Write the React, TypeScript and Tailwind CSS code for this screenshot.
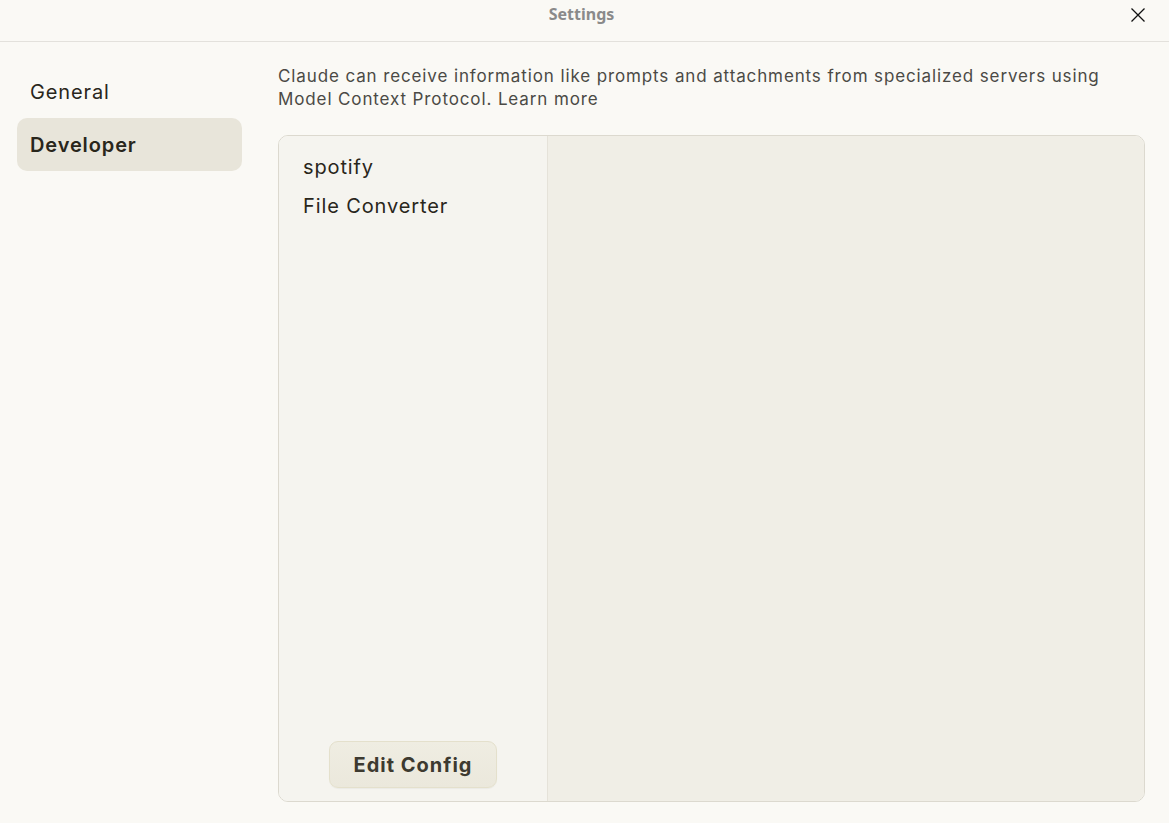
import React from "react";

const font = { fontFamily: "Inter, 'Noto Sans', sans-serif" };

export default function App() {
  return (
    <div className="h-[823px] w-full bg-[#faf9f5] flex flex-col text-[#29261b] tracking-[0.055em]" style={font}>
      {/* title bar */}
      <header className="relative h-[42px] shrink-0 border-b border-[#e3e1dc] flex items-center justify-center tracking-normal">
        <span
          className="text-[16px] font-bold text-[#8a8a8a] -mt-[14px] -ml-[6px]"
          style={{ fontFamily: "'Noto Sans', 'DejaVu Sans', sans-serif" }}
        >
          Settings
        </span>
        <button className="absolute right-[22px] top-[6px] w-[18px] h-[18px] flex items-center justify-center">
          <svg viewBox="0 0 16 16" className="w-[16px] h-[16px]" fill="none" stroke="#111" strokeWidth="1.3">
            <path d="M1.5 1.5 14.5 14.5M14.5 1.5 1.5 14.5" />
          </svg>
        </button>
      </header>

      <div className="flex flex-1 min-h-0">
        {/* sidebar */}
        <nav className="w-[261px] shrink-0 pl-[17px] pr-[19px] pt-[23px] flex flex-col">
          <div className="h-[53px] px-[13px] flex items-center text-[20px]">General</div>
          <div className="h-[53px] px-[13px] flex items-center text-[20px] font-semibold rounded-[10px] bg-[#e8e5da]">
            Developer
          </div>
        </nav>

        {/* main */}
        <main className="flex-1 flex flex-col pl-[17px] pr-[24px] pt-[23px] pb-[21px]">
          <p className="text-[17px] leading-[23px] text-[#4b4a45] pr-[40px]">
            Claude can receive information like prompts and attachments from specialized servers using Model Context
            Protocol. Learn more
          </p>
          <div className="mt-[24px] flex-1 flex rounded-[10px] border border-[#dcd9cf] overflow-hidden">
            <div className="w-[269px] shrink-0 bg-[#f5f4ef] border-r border-[#e5e2d9] flex flex-col px-[24px] pt-[12px] pb-[13px]">
              <div className="text-[20px] leading-[39px]">spotify</div>
              <div className="text-[20px] leading-[39px]">File Converter</div>
              <div className="mt-auto flex justify-center">
                <button className="w-[168px] h-[47px] rounded-[9px] border border-[#e4e0cc] bg-gradient-to-b from-[#efede2] to-[#ebe8dc] text-[20px] font-bold tracking-[0.05em] text-[#3d3a30] shadow-[0_1px_1px_rgba(0,0,0,0.04)]">
                  Edit Config
                </button>
              </div>
            </div>
            <div className="flex-1 bg-[#f0eee6]" />
          </div>
        </main>
      </div>
    </div>
  );
}
